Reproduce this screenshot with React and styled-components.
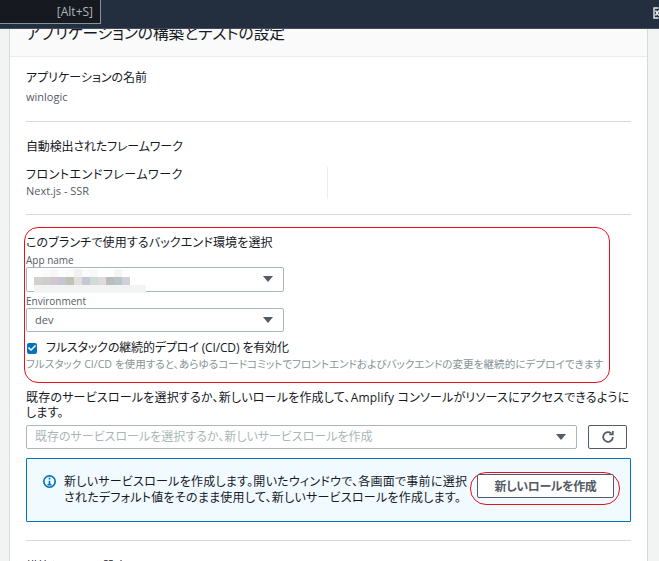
import React from 'react'
import styled, { createGlobalStyle } from 'styled-components'
import { FaCheck } from 'react-icons/fa'

const GlobalStyle = createGlobalStyle`
  html, body {
    margin: 0;
    height: 561px;
    overflow: hidden;
    background: #f2f3f3;
    font-family: "Open Sans", "Noto Sans CJK JP", sans-serif;
    font-feature-settings: "palt";
    color: #16191f;
  }
  * { box-sizing: border-box; }
`

const TopBar = styled.header`
  position: relative;
  z-index: 2;
  height: 29px;
  background: #232f3e;
  border-bottom: 1px solid #414d5c;
`
const SearchBox = styled.div`
  width: 101px;
  height: 24px;
  background: #16191f;
  border: 1px solid #879596;
  border-left: 0;
  border-top: 0;
  color: #aab7b8;
  font-size: 12px;
  line-height: 23px;
  text-align: right;
  padding-right: 7px;
`
const CloseGlyph = styled.svg`
  position: absolute;
  right: 0;
  top: 7px;
`
const Card = styled.main`
  margin: -5px 11px 0 9px;
  background: #fff;
  border-left: 1px solid #d5dbdb;
  border-right: 1px solid #d5dbdb;
  height: 540px;
  overflow: hidden;
`
const CardHeader = styled.div`
  height: 33px;
  background: #fafafa;
  border-bottom: 1px solid #eaeded;
  padding-left: 16px;
  font-size: 15.7px;
  line-height: 18px;
`
const CardBody = styled.div`
  padding: 13px 16px 0;
`
const Label = styled.div`
  font-size: 12px;
  line-height: 16px;
  letter-spacing: ${p => p.$track || 0}px;
`
const Value = styled.div`
  font-size: 11px;
  line-height: 14px;
  color: #545b64;
  margin-top: ${p => p.$gap}px;
`
const Divider = styled.hr`
  border: 0;
  border-top: 1px solid #d5dbdb;
  margin: ${p => p.$top}px 0 ${p => p.$bottom}px;
`
const FrameworkColumn = styled.div`
  width: 302px;
  height: 32px;
  border-right: 1px solid #eaeded;
  margin-top: 12px;
`
const Annotated = styled.section`
  margin: 0 21px 0 -2px;
  height: 156px;
  border: 1px solid #e8101f;
  border-radius: 14px;
  padding: 7px 1px 0 1px;
`
const SmallLabel = styled.div`
  font-size: 10px;
  line-height: 14px;
  color: #545b64;
  margin-top: 2px;
`
const Select = styled.div`
  position: relative;
  width: ${p => p.$width}px;
  height: ${p => p.$height || 24}px;
  border: 1px solid #aab7b8;
  border-radius: 2px;
  padding-left: 8px;
  font-size: ${p => (p.$placeholder ? 12 : 11)}px;
  line-height: 22px;
  color: ${p => (p.$placeholder ? '#aab7b8' : '#545b64')};
  background: #fff;
`
const Caret = styled.span`
  position: absolute;
  right: 10px;
  top: 8px;
  border-left: 5px solid transparent;
  border-right: 5px solid transparent;
  border-top: 6px solid #545b64;
`
const Mosaic = styled.div`
  position: absolute;
  left: 7px;
  top: 1px;
  display: grid;
  grid-template-columns: repeat(12, 8px);
  grid-auto-rows: 8px;
`
const Tile = styled.span`
  background: ${p => p.$color};
`
const Smudge = styled.div`
  position: absolute;
  left: 7px;
  top: 17px;
  width: 112px;
  height: 8px;
  background: #f2f4f4;
`
const CheckRow = styled.label`
  display: flex;
  align-items: center;
  gap: 9px;
  margin: 8px 0 0 1px;
  font-size: 12px;
  line-height: 16px;
  letter-spacing: -0.15px;
`
const CheckBox = styled.span`
  display: flex;
  align-items: center;
  justify-content: center;
  width: 10px;
  height: 11px;
  border-radius: 2px;
  background: #0073bb;
  color: #fff;
  font-size: 8px;
`
const Hint = styled.div`
  font-size: 10.6px;
  line-height: 14px;
  color: #879596;
  white-space: nowrap;
  margin-top: 1px;
`
const Paragraph = styled.p`
  margin: 0;
  padding-top: 7px;
  font-size: 12px;
  line-height: 15px;
  letter-spacing: 0.2px;
`
const RoleRow = styled.div`
  display: flex;
  gap: 11px;
  margin-top: 5px;
`
const RefreshButton = styled.button`
  display: flex;
  align-items: center;
  justify-content: center;
  width: 39px;
  height: 24px;
  padding: 0;
  background: #fff;
  border: 1px solid #545b64;
  border-radius: 2px;
`
const InfoBox = styled.div`
  display: flex;
  align-items: center;
  height: 64px;
  margin-top: 9px;
  padding: 0 10px 0 16px;
  background: #f1faff;
  border: 1px solid #0073bb;
  border-radius: 1px;
`
const InfoIcon = styled.svg`
  align-self: flex-start;
  margin-top: 16px;
  flex: none;
`
const InfoText = styled.div`
  flex: 1;
  margin-left: 8px;
  font-size: 12px;
  line-height: 16px;
  letter-spacing: 0.25px;
  white-space: nowrap;
`
const ButtonRing = styled.div`
  margin-bottom: 4px;
  padding: 1px 5px 6px 6px;
  border: 1px solid #e8101f;
  border-radius: 16px;
`
const RoleButton = styled.button`
  display: block;
  width: 137px;
  height: 24px;
  padding: 0;
  background: #fff;
  border: 1px solid #545b64;
  border-radius: 2px;
  color: #545b64;
  font-family: inherit;
  font-feature-settings: inherit;
  font-size: 12px;
  font-weight: 700;
  letter-spacing: -0.4px;
`

const tiles = [
  '#fff', '#fbfbfb', '#f8f7f8', '#fff', '#fbfbfa', '#f1f1f5', '#fbfbfb', '#f9f9f9', '#fff', '#fff', '#f5f5f5', '#fff',
  '#d4d0cf', '#ccd0cb', '#d0c6cf', '#c5c6d0', '#c0c2b8', '#e3dedb', '#c5c6d6', '#d0dad5', '#dedade', '#bcbcbc', '#b8c6c9', '#d0d0da',
]

function App() {
  return (
    <>
      <GlobalStyle />
      <TopBar>
        <SearchBox>[Alt+S]</SearchBox>
        <CloseGlyph width="6" height="12" viewBox="0 0 6 12">
          <path d="M5.5 1H1v10h4.5" fill="#232f3e" stroke="#eaeded" strokeWidth="1.4" />
          <path d="M2.5 3.5L6 8.5M6 3.5L2.5 8.5" stroke="#eaeded" strokeWidth="1.4" />
        </CloseGlyph>
      </TopBar>
      <Card>
        <CardHeader>アプリケーションの構築とテストの設定</CardHeader>
        <CardBody>
          <Label>アプリケーションの名前</Label>
          <Value $gap={4}>winlogic</Value>
          <Divider $top={17} $bottom={17} />
          <Label $track={-0.15}>自動検出されたフレームワーク</Label>
          <FrameworkColumn>
            <Label $track={0.5}>フロントエンドフレームワーク</Label>
            <Value $gap={1}>Next.js - SSR</Value>
          </FrameworkColumn>
          <Divider $top={15} $bottom={12} />
          <Annotated>
            <Label $track={0.15}>このブランチで使用するバックエンド環境を選択</Label>
            <SmallLabel>App name</SmallLabel>
            <Select $width={258} $height={25}>
              <Mosaic>
                {tiles.map((color, i) => <Tile key={i} $color={color} />)}
              </Mosaic>
              <Smudge />
              <Caret />
            </Select>
            <SmallLabel>Environment</SmallLabel>
            <Select $width={258}>
              dev
              <Caret />
            </Select>
            <CheckRow>
              <CheckBox><FaCheck /></CheckBox>
              フルスタックの継続的デプロイ (CI/CD) を有効化
            </CheckRow>
            <Hint>フルスタック CI/CD を使用すると、あらゆるコードコミットでフロントエンドおよびバックエンドの変更を継続的にデプロイできます</Hint>
          </Annotated>
          <Paragraph>既存のサービスロールを選択するか、新しいロールを作成して、Amplify コンソールがリソースにアクセスできるように<br />します。</Paragraph>
          <RoleRow>
            <Select $width={551} $placeholder>
              既存のサービスロールを選択するか、新しいサービスロールを作成
              <Caret />
            </Select>
            <RefreshButton>
              <svg width="14" height="14" viewBox="0 0 16 16" fill="none" stroke="#545b64" strokeWidth="2">
                <path d="M13.5 8a5.5 5.5 0 1 1-1.8-4.1" />
                <path d="M13.5 1v4h-4" />
              </svg>
            </RefreshButton>
          </RoleRow>
          <InfoBox>
            <InfoIcon width="13" height="13" viewBox="0 0 16 16" fill="none" stroke="#0073bb" strokeWidth="2">
              <circle cx="8" cy="8" r="7" />
              <path d="M8 7v5M5.5 12h5M8 3.5v2" />
            </InfoIcon>
            <InfoText>
              新しいサービスロールを作成します。開いたウィンドウで、各画面で事前に選択<br />
              されたデフォルト値をそのまま使用して、新しいサービスロールを作成します。
            </InfoText>
            <ButtonRing>
              <RoleButton>新しいロールを作成</RoleButton>
            </ButtonRing>
          </InfoBox>
          <Divider $top={18} $bottom={18} />
          <Label>構築とテストの設定</Label>
        </CardBody>
      </Card>
    </>
  )
}

export default App
